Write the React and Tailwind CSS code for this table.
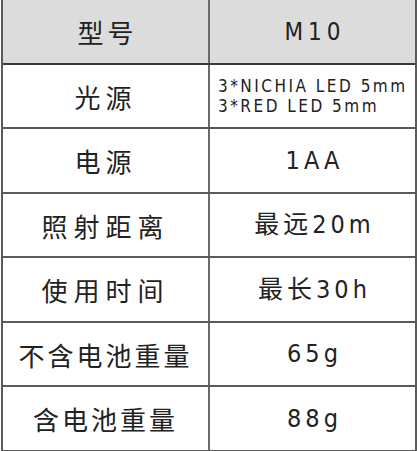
export default function App() {
  const rows = [
    { l: "光源", tl: "tracking-[5px]", h: "h-[64px]", r: null },
    { l: "电源", tl: "tracking-[5px]", h: "h-[65px]", r: "1AA" },
    { l: "照射距离", tl: "tracking-[6px]", h: "h-[64px]", r: "最远20m" },
    { l: "使用时间", tl: "tracking-[6px]", h: "h-[65px]", r: "最长30h" },
    { l: "不含电池重量", tl: "tracking-[3px]", h: "h-[64px]", r: "65g" },
    { l: "含电池重量", tl: "tracking-[3px]", h: "h-[63px]", r: "88g" },
  ];
  return (
    <div className="w-[417px] h-[451px] bg-white text-[#222222]">
      <div className="ml-[1px] w-[416px] border-l-2 border-r-2 border-b-2 border-[#5a5a5a]">
        <div className="grid grid-cols-[207px_1fr] h-[65px] border-b-2 border-[#3a3a3a] bg-[#dcdcdc]">
          <div className="flex items-center justify-center border-r-2 border-[#6a6a6a] text-[26px] tracking-[4px] pl-[4px] font-normal font-['Noto_Sans_CJK_SC',sans-serif]">
            型号
          </div>
          <div className="flex items-center justify-center text-[24px] tracking-[5px] pl-[5px] font-['DejaVu_Sans_Condensed','Noto_Sans_CJK_SC',sans-serif]">
            M10
          </div>
        </div>
        {rows.map((row, i) => (
          <div
            key={i}
            className={`grid grid-cols-[207px_1fr] ${row.h} border-b-2 border-[#5a5a5a] last:border-b-0`}
          >
            <div
              className={`flex items-center justify-center border-r-2 border-[#6a6a6a] text-[26px] font-normal font-['Noto_Sans_CJK_SC',sans-serif] ${row.tl}`}
            >
              {row.l}
            </div>
            {row.r === null ? (
              <div className="flex flex-col justify-center pl-[8px] text-[17px] leading-[20px] tracking-[2.5px] font-['DejaVu_Sans_Condensed',sans-serif]">
                <div>3*NICHIA LED 5mm</div>
                <div>3*RED LED 5mm</div>
              </div>
            ) : (
              <div className="flex items-center justify-center text-[25px] tracking-[4px] pl-[4px] font-['DejaVu_Sans_Condensed','Noto_Sans_CJK_SC',sans-serif]">
                {row.r}
              </div>
            )}
          </div>
        ))}
      </div>
    </div>
  );
}
